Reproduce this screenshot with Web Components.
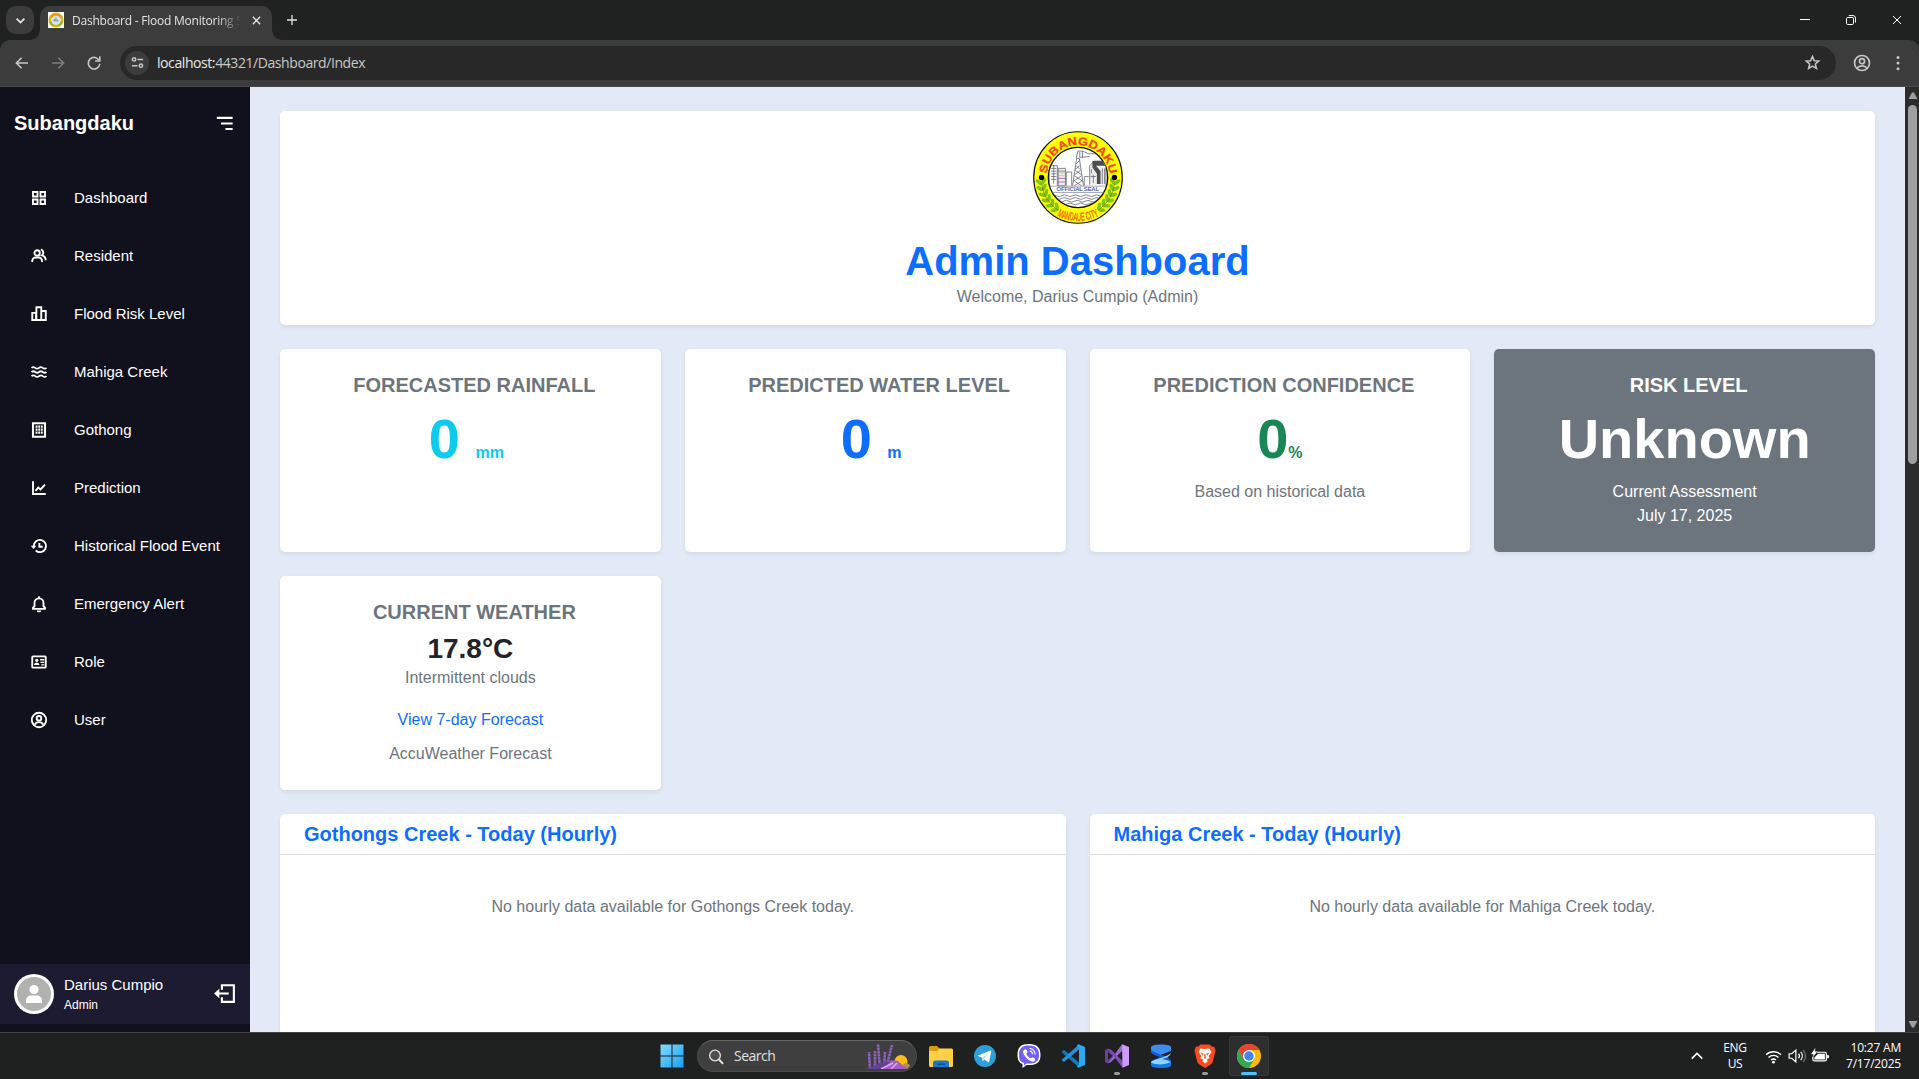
<!DOCTYPE html>
<html lang="en">
<head>
<meta charset="utf-8">
<title>Dashboard - Flood Monitoring System</title>
<style>
html,body{margin:0;height:100%;overflow:hidden;background:#1f2020;font-family:"Liberation Sans",Arial,sans-serif}
</style>
</head>
<body>
<desktop-screen></desktop-screen>
<script>
const UI = '"Open Sans","Noto Sans",sans-serif';

const define = (name, css, html) => customElements.define(name, class extends HTMLElement {
  constructor() {
    super();
    this.attachShadow({ mode: 'open' }).innerHTML =
      `<style>*{box-sizing:border-box}${css}</style>${typeof html === 'function' ? html(this) : html}`;
  }
});

const S = 'fill="none" stroke="currentColor"';
const ICONS = {
  grid: `<g ${S}><path d="M4 4h6v6H4zM14 4h6v6h-6zM4 14h6v6H4zM14 14h6v6h-6z"/></g>`,
  group: `<g ${S}><circle cx="9.500" cy="8" r="3.600"/><path d="M3 20v-1.500a4.500 4.500 0 0 1 4.500-4.500h4a4.500 4.500 0 0 1 4.500 4.500V20"/><path d="M14.500 3.200a4.600 4.600 0 0 1 1.400 8c3.200.9 5.100 3.100 5.100 6.300"/></g>`,
  bars: `<g ${S}><path d="M3 10.500h5V20H3zM8.500 20V3h6.500v17zM15.500 8H21v12h-6"/></g>`,
  water: `<g ${S}><path d="M2 6.500c2-1.600 3-1.600 5 0s3 1.600 5 0 3-1.600 5 0 3 1.600 5 0M2 12c2-1.600 3-1.600 5 0s3 1.600 5 0 3-1.600 5 0 3 1.600 5 0M2 17.500c2-1.600 3-1.600 5 0s3 1.600 5 0 3-1.600 5 0 3 1.600 5 0"/></g>`,
  building: `<path ${S} stroke-width="2.800" d="M4 3h16v18H4z"/><path fill="currentColor" d="M7.500 6h2.500v3H7.500zM11 6h2.500v3H11zM14.500 6H17v3h-2.500zM7.500 10h2.500v3H7.500zM11 10h2.500v3H11zM14.500 10H17v3h-2.500zM7.500 14h2.500v3H7.500zM11 14h2.500v3H11zM14.500 14H17v3h-2.500z"/>`,
  line: `<g ${S}><path d="M4 3v17h17"/><path d="M7.300 15.700 11 11.500l3 2.500 6-6.500"/></g>`,
  history: `<g ${S}><path d="M5 12a8.200 8.200 0 1 1 2.600 6"/><path d="M12.500 8v5h4.500"/></g><path fill="currentColor" d="M1 11.500h7.500l-3.700 4.600z"/>`,
  bell: `<g ${S}><path d="M6 10.500a6 6 0 0 1 12 0V15l2 2v1.500H4V17l2-2z"/></g><path fill="currentColor" d="M9 20.500h6a3 2.500 0 0 1-6 0zM10.500 3a1.500 1.500 0 0 1 3 0v2h-3z"/>`,
  idcard: `<rect ${S} x="3" y="4.500" width="18" height="15" rx="1"/><circle cx="9" cy="9.800" r="2.100" fill="currentColor"/><path fill="currentColor" d="M5.500 16c0-2.400 1.500-3.500 3.500-3.500s3.500 1.100 3.500 3.500zM13.500 8H19v2h-5.500zM14 11.500h5v1.800h-5zM15 15h4v1.500h-4z"/>`,
  user: `<g ${S}><circle cx="12" cy="12" r="9.600"/><circle cx="12" cy="9.700" r="3.100"/><path d="M6.500 18.500C7 15.500 9 14.800 12 14.800s5 .7 5.500 3.700"/></g>`,
  menu: `<path fill="currentColor" d="M4 5h16.500v2.200H4zM8.300 10.900h12.200v2.200H8.300zM13 16.700h7.500v2.200H13z"/>`,
  logout: `<path ${S} d="M9.500 8.500V4H21v16H9.500v-4.500"/><path ${S} d="M5 12h11"/><path fill="currentColor" d="M2 12l5-4.500v9z"/>`,
  back: `<path ${S} d="M20 12H5M11.500 5 4.500 12l7 7"/>`,
  forward: `<path ${S} d="M4 12h15M12.500 5l7 7-7 7"/>`,
  reload: `<path ${S} d="M19 9A7.700 7.700 0 1 0 19.700 13"/><path fill="currentColor" d="M20.800 3v7.300h-7.300v-2.100h5.200V3z"/>`,
  tune: `<g ${S}><circle cx="6.500" cy="7" r="2.700"/><path d="M12 7h9M3 17h9"/><circle cx="17.500" cy="17" r="2.700"/></g>`,
  star: `<path ${S} d="M12 3.500l2.500 5.900 6.300.5-4.800 4.200 1.500 6.200-5.500-3.300-5.500 3.300 1.500-6.200-4.800-4.200 6.300-.5z"/>`,
  profile: `<g ${S}><circle cx="12" cy="12" r="10"/><circle cx="12" cy="9.600" r="3.400"/><path d="M5 19c1.800-2.300 4-3.200 7-3.200s5.200.9 7 3.200"/></g>`,
  dots: `<g fill="currentColor"><circle cx="12" cy="4.500" r="2"/><circle cx="12" cy="12" r="2"/><circle cx="12" cy="19.500" r="2"/></g>`,
  down: `<path ${S} stroke-width="4" d="M3.500 8l8.500 8.500L20.500 8"/>`,
  up: `<path ${S} stroke-width="2.600" d="M3 16.500l9-9 9 9"/>`,
  close: `<path ${S} d="M4 4l16 16M20 4L4 20"/>`,
  plus: `<path ${S} stroke-width="2.600" d="M12 2v20M2 12h20"/>`,
  minus: `<path ${S} d="M2 11h20"/>`,
  restore: `<g ${S}><rect x="3" y="7" width="14" height="14" rx="2.500"/><path d="M7.500 3.200H16a5 5 0 0 1 5 5V17"/></g>`,
  search: `<g ${S}><circle cx="10.500" cy="10.500" r="8" fill="#ffffff14"/><path d="M16.500 16.500 22.500 23" stroke-width="3"/></g>`,
  wifi: `<g ${S}><path d="M1.500 9.500a15 15 0 0 1 21 0M5 13.300a10 10 0 0 1 14 0M8.500 17a5.200 5.200 0 0 1 7 0"/></g><circle cx="12" cy="20" r="2" fill="currentColor"/>`,
  sound: `<g ${S} stroke-width="1.600"><path d="M1.500 9v6H5l5.500 5V4L5 9zM14 9a4.500 4.500 0 0 1 0 6M17 6.500a8.500 8.500 0 0 1 0 11"/><path d="M20.200 4a12 12 0 0 1 0 16" opacity=".35"/></g>`,
  battery: `<path ${S} stroke-width="1.600" d="M8 7h10.500a2 2 0 0 1 2 2v7.500a2 2 0 0 1-2 2h-14a2 2 0 0 1-2-2V13"/><path fill="currentColor" d="M9.500 9h9v7.500h-14V14zM21.500 10.500h1a1.500 1.500 0 0 1 1.500 1.500v1.500a1.500 1.500 0 0 1-1.500 1.500h-1zM6 1 0 9.500h3.500L2 14l6.500-8H5z"/>`
};
define('ui-icon', ':host{display:block;flex:none;line-height:0}svg{display:block;width:100%;height:100%}',
  el => `<svg viewBox="0 0 24 24" stroke-width="${el.getAttribute('weight') || 2}">${ICONS[el.getAttribute('name')]}</svg>`);

const branch = Array.from({ length: 6 }, (_, i) => {
  const deg = 171 - i * 9.500, a = deg * Math.PI / 180;
  const x = (50 + 41 * Math.cos(a)).toFixed(1), y = (52 + 41 * Math.sin(a)).toFixed(1);
  return `<g transform="translate(${x} ${y}) rotate(${deg + 90})"><ellipse cx="3.600" rx="4.400" ry="2" transform="rotate(42)"/><ellipse cx="3.600" rx="4.400" ry="2" transform="rotate(-42)"/></g>`;
}).join('') + '<path d="M9.500 58A41 41 0 0 0 28 87" fill="none" stroke="#a06a10" stroke-width=".8"/>';
define('barangay-seal', ':host{display:block}svg{display:block;width:100%;height:100%}', `
<svg viewBox="0 0 100 102" preserveAspectRatio="none">
  <defs>
    <path id="top" d="M15 51a35 35.500 0 0 1 70 0"/>
    <path id="bot" d="M24 92a55 55 0 0 0 52 0"/>
    <clipPath id="in"><circle cx="50" cy="51" r="33"/></clipPath>
  </defs>
  <ellipse cx="50" cy="51" rx="49.200" ry="50.200" fill="#ffff05" stroke="#111" stroke-width="1.300"/>
  <g fill="#7bc618">${branch}<g transform="translate(100 0) scale(-1 1)">${branch}</g></g>
  <circle cx="50" cy="51" r="33" fill="#fff" stroke="#111" stroke-width="1.500"/>
  <g clip-path="url(#in)" fill="none" stroke="#555a66" stroke-width=".8">
    <path d="M18 60V38h9v22M20 41h6M20 44h6M20 47h6M20 50h6M20 53h6M23 38v20M37 60V45h6v15M57 60V50h5"/>
    <path d="M28 60V41h8v19z" fill="#eee"/><path d="M28 44h8M28 52h8M28 56h8" stroke="#9b45a8"/><path d="M29 46h6M29 49h6" stroke="#a7cc35"/>
    <path d="M44 60 48.500 30h3L56 60M45 55l9-6M55 55l-9-6M46 48l7-5M54 48l-7-5M47 42l5-4M52 42l-4-4M48 36l4-4M46 60l8-5M54 60l-8-5"/>
    <path d="M48 30l2-8h5l7 3h8M52 23v6l11-1M55 22v7"/>
    <path d="M63 59V38l5-5h13v26" fill="#eee"/><path d="M66 33h14v5H70l5 6v14h-4V47l-5-7z" fill="#4d4d52" stroke="none"/><path d="M77 41v17M79.500 41v17M65 42v4M67 48v9M64 50h6"/>
    <path d="M16 60.500h68M16 67.500h68" stroke="#889"/>
    <path d="M20 71q3-2 6 0t6 0 6 0 6 0 6 0 6 0 6 0 6 0 6 0 6 0M20 74q3-2 6 0t6 0 6 0 6 0 6 0 6 0 6 0 6 0 6 0 6 0M22 77q3-2 6 0t6 0 6 0 6 0 6 0 6 0 6 0 6 0 6 0M26 80q3-2 6 0t6 0 6 0 6 0 6 0 6 0 6 0 6 0"/>
  </g>
  <circle cx="9.500" cy="51" r="3" fill="#000"/><circle cx="90.500" cy="51" r="3" fill="#000"/>
  <text font-family="Liberation Sans" font-size="5.800" fill="#2c50c8" stroke="#2c50c8" stroke-width=".15" x="26" y="66.200" textLength="47" lengthAdjust="spacingAndGlyphs">OFFICIAL SEAL</text>
  <text font-family="Liberation Sans" font-weight="700" font-size="12.500" fill="#f4471c" stroke="#f4471c" stroke-width=".3"><textPath href="#top" startOffset="4" textLength="103" lengthAdjust="spacingAndGlyphs">SUBANGDAKU</textPath></text>
  <text font-family="Liberation Sans Narrow,Liberation Sans" font-size="12.500" fill="#f4581c" stroke="#f4581c" stroke-width=".3"><textPath href="#bot" startOffset="3" textLength="48" lengthAdjust="spacingAndGlyphs">MANDAUE CITY</textPath></text>
</svg>`);

define('seal-favicon', ':host{display:block;flex:none;width:16px;height:16px;background:#fff}svg{display:block}',
`<svg width="16" height="16"><circle cx="8" cy="8" r="6.300" fill="#dce4e8" stroke="#d5b800" stroke-width="2.400"/><path d="M3 5.500a5.800 5.800 0 0 1 10 0" fill="none" stroke="#ee9a20" stroke-width="2"/><path d="M2.300 9.500a6 6 0 0 0 3 4M13.700 9.500a6 6 0 0 1-3 4" fill="none" stroke="#9cb428" stroke-width="2"/><path d="M5.500 9.500V7h2V5h1v2.500h2v2z" fill="#98a0ae"/></svg>`);

define('browser-tabs', `
:host{display:flex;height:40px;background:#202221;align-items:flex-end;color:#e3e3e3;font-family:${UI}}
.drop{width:28px;height:28px;border-radius:10px;background:#3c3c3c;margin:0 6px 6px;display:grid;place-items:center}
.drop ui-icon{width:11px;height:11px}
.tab{position:relative;width:232px;height:34px;background:#3c3c3c;border-radius:10px 10px 0 0;display:flex;align-items:center;padding:0 10px 6px 8px}
.tab:before,.tab:after{content:"";position:absolute;bottom:0;width:10px;height:10px}
.tab:before{left:-10px;background:radial-gradient(circle at 0 0,transparent 9.500px,#3c3c3c 10px)}
.tab:after{right:-10px;background:radial-gradient(circle at 100% 0,transparent 9.500px,#3c3c3c 10px)}
.title{margin-left:8px;width:174px;font-size:12px;letter-spacing:-.23px;line-height:17px;white-space:nowrap;-webkit-mask:linear-gradient(90deg,#000 145px,transparent 169px);mask:linear-gradient(90deg,#000 145px,transparent 169px)}
.x{width:11px;height:11px;margin-left:auto}
.plus{width:12px;height:12px;margin:0 0 14px 14px}
.win{margin-left:auto;display:flex;align-self:stretch;color:#fff}
.win div{width:46px;display:grid;place-items:center}
.win ui-icon{width:12px;height:12px}
.win div:last-child{width:45px}`,
`<div class="drop"><ui-icon name="down"></ui-icon></div>
<div class="tab"><seal-favicon></seal-favicon><div class="title">Dashboard - Flood Monitoring S</div><ui-icon class="x" weight="3" name="close"></ui-icon></div>
<ui-icon class="plus" name="plus"></ui-icon>
<div class="win"><div><ui-icon name="minus"></ui-icon></div><div><ui-icon name="restore"></ui-icon></div><div><ui-icon name="close"></ui-icon></div></div>`);

define('browser-toolbar', `
:host{display:block;background:#202221;height:47px}
.bar{display:flex;align-items:center;height:47px;padding:0 12px 1px 13px;background:#3c3c3c;border-bottom:1px solid #4a4a4a;border-radius:10px 10px 0 0;color:#c7c7c7;font-family:${UI}}
.nav{width:18px;height:18px;margin-right:18px}
.nav.off{color:#7d7d7d}.nav.re{margin-right:17px}
.omni{flex:1;height:34px;border-radius:17px;background:#282828;display:flex;align-items:center;padding:0 15px 0 5px}
.site{width:24px;height:24px;border-radius:50%;background:#3c3c3c;display:grid;place-items:center;margin-right:8px}
.site ui-icon{width:15px;height:15px}
.url{font-size:14px;letter-spacing:-.42px;color:#c9c9c9}.url b{font-weight:400;color:#e8e8e8}
.star{margin-left:auto;width:17px;height:17px}
.prof{width:18px;height:18px;margin:0 18px 0 17px}
.dots{width:18px;height:18px}`,
`<div class="bar"><ui-icon class="nav" weight="2.200" name="back"></ui-icon><ui-icon class="nav off" weight="2.200" name="forward"></ui-icon><ui-icon class="nav re" weight="2.200" name="reload"></ui-icon>
<div class="omni"><div class="site"><ui-icon weight="2.400" name="tune"></ui-icon></div><div class="url"><b>localhost:</b>44321/Dashboard/Index</div><ui-icon class="star" weight="2.200" name="star"></ui-icon></div>
<ui-icon class="prof" weight="2.200" name="profile"></ui-icon><ui-icon class="dots" name="dots"></ui-icon></div>`);

define('nav-item', `
:host{display:flex;align-items:center;height:50px;margin-bottom:8px;color:#fff;font-size:15px}
ui-icon{width:18px;height:18px;margin:1px 26px 0 16px}`,
el => `<ui-icon weight="2.500" name="${el.getAttribute('icon')}"></ui-icon><slot></slot>`);

define('user-panel', `
:host{display:flex;align-items:center;height:60px;background:#1d1b31;padding:0 14px;color:#fff}
svg{width:40px;height:40px;margin-right:10px;flex:none}
.n{font-size:15px;line-height:20px}.r{font-size:12px;line-height:16px;margin-top:2px}
.who{margin-top:-1px}
ui-icon{width:25px;height:25px;margin-left:auto;margin-right:-1px;margin-top:-2px}`,
`<svg viewBox="0 0 40 40"><circle cx="20" cy="20" r="20" fill="#fff"/><circle cx="20" cy="20" r="17" fill="#b1b1b1"/><circle cx="20" cy="15.500" r="4.600" fill="#fff"/><path d="M12 29v-2.500a5 5 0 0 1 5-5h6a5 5 0 0 1 5 5V29z" fill="#fff"/></svg>
<div class="who"><div class="n"><slot></slot></div><div class="r"><slot name="role"></slot></div></div><ui-icon name="logout"></ui-icon>`);

define('side-bar', `
:host{display:flex;flex-direction:column;width:250px;flex:none;background:#11101d;color:#fff;padding-bottom:8px}
header{display:flex;align-items:center;justify-content:space-between;height:60px;padding:12px 14px 0;font-size:20px;font-weight:700}
header ui-icon{width:23px;height:23px}
nav{padding:25px 14px 0;flex:1}`,
`<header><span>Subangdaku</span><ui-icon name="menu"></ui-icon></header>
<nav>
<nav-item icon="grid">Dashboard</nav-item><nav-item icon="group">Resident</nav-item><nav-item icon="bars">Flood Risk Level</nav-item>
<nav-item icon="water">Mahiga Creek</nav-item><nav-item icon="building">Gothong</nav-item><nav-item icon="line">Prediction</nav-item>
<nav-item icon="history">Historical Flood Event</nav-item><nav-item icon="bell">Emergency Alert</nav-item><nav-item icon="idcard">Role</nav-item><nav-item icon="user">User</nav-item>
</nav>
<user-panel>Darius Cumpio<span slot="role">Admin</span></user-panel>`);

const CARD = 'background:#fff;border-radius:5px;box-shadow:0 2px 4px rgba(0,0,0,.075);';
define('page-banner', `
:host{display:flex;flex-direction:column;align-items:center;${CARD}height:214px;padding-top:20px}
barangay-seal{width:90px;height:93px}
h1{margin:13px 0 0;font-size:40px;line-height:48px;color:#0d6efd}
p{margin:0;font-size:16px;line-height:24px;color:#6c757d}`,
`<barangay-seal></barangay-seal><h1>Admin Dashboard</h1><p>Welcome, Darius Cumpio (Admin)</p>`);

define('stat-card', `
:host{display:block;${CARD}padding:24px;text-align:center;font-size:16px;line-height:24px;color:#6c757d}
:host([dark]){background:#6c757d;color:#fff}
h5{margin:0 0 8px;padding-left:8px;font-size:20px;line-height:24px;font-weight:700}`,
el => `<h5>${el.getAttribute('heading')}</h5><slot></slot>`);

define('stat-value', `
:host{display:block;font-size:56px;line-height:67.200px;font-weight:700;margin-bottom:8px;white-space:pre}
span{font-size:16px;line-height:1}
:host([unit=mm]) span,:host([unit=m]) span{margin-right:8px}`,
el => { const u = el.getAttribute('unit'); return `<slot></slot>${u ? (u === '%' ? '' : ' ') + `<span>${u}</span>` : ''}`; });

define('weather-report', `
:host{display:block}
.t{font-size:28px;line-height:33.600px;font-weight:700;color:#212529}
.l{color:#0d6efd;margin:18px 0 10px}`,
`<div class="t">17.8°C</div><div>Intermittent clouds</div><div class="l">View 7-day Forecast</div><div>AccuWeather Forecast</div>`);

define('creek-card', `
:host{display:block;${CARD}height:420px}
h5{margin:0;padding:8px 24px;font-size:20px;line-height:24px;color:#0d6efd;border-bottom:1px solid #dcdddf}
p{margin:0;padding-top:40px;text-align:center;font-size:16px;line-height:24px;color:#6c757d}`,
el => `<h5>${el.getAttribute('creek')} Creek - Today (Hourly)</h5><p>No hourly data available for ${el.getAttribute('creek')} Creek today.</p>`);

define('dashboard-page', `
:host{display:block;flex:1;background:#e4e9f7;padding:24px 30px 0;overflow:hidden}
.stats{display:grid;grid-template-columns:repeat(4,1fr);gap:24px;margin:24px 0}
.creeks{display:grid;grid-template-columns:1fr 1fr;gap:24px}`,
`<page-banner></page-banner>
<div class="stats">
<stat-card heading="FORECASTED RAINFALL"><stat-value unit="mm" style="color:#0dcaf0">0</stat-value></stat-card>
<stat-card heading="PREDICTED WATER LEVEL"><stat-value unit="m" style="color:#0d6efd">0</stat-value></stat-card>
<stat-card heading="PREDICTION CONFIDENCE"><stat-value unit="%" style="color:#198754">0</stat-value>Based on historical data</stat-card>
<stat-card dark heading="RISK LEVEL"><stat-value>Unknown</stat-value>Current Assessment<br>July 17, 2025</stat-card>
<stat-card heading="CURRENT WEATHER"><weather-report></weather-report></stat-card>
</div>
<div class="creeks"><creek-card creek="Gothongs"></creek-card><creek-card creek="Mahiga"></creek-card></div>`);

define('scroll-bar', `
:host{display:flex;flex-direction:column;align-items:center;width:14px;flex:none;background:#2c2c2c;padding:5px 0 4px 1px}
.t{width:9px;height:359px;border-radius:5px;background:#9f9f9f;margin-top:6px}
svg{display:block;width:10px;height:7px}svg:last-child{margin-top:auto}`,
`<svg viewBox="0 0 10 7"><path d="M4 .5h2L9.500 7H.5z" fill="#9f9f9f"/></svg><div class="t"></div><svg viewBox="0 0 10 7"><path d="M.5 0h9L6 6.500H4z" fill="#9f9f9f"/></svg>`);

const APPS = {
  start: `<defs><linearGradient id="g" x1="0" y1="0" x2="1" y2="1"><stop stop-color="#7fdcff"/><stop offset="1" stop-color="#1d9df2"/></linearGradient></defs><path d="M.5.500h11v11H.5zM12.500.500h11v11h-11zM.5 12.500h11v11H.5zM12.500 12.500h11v11h-11z" fill="url(#g)"/>`,
  folder: `<path d="M0 3.500Q0 2 1.500 2H8l2.500 2.500V8H0z" fill="#dd9b0c"/><path d="M0 7h8l2.500-2.500H22.500Q24 4.500 24 6v15.500q0 1.500-1.500 1.500h-21Q0 23 0 21.500z" fill="#ffcf45"/><path d="M4 23v-4q0-2.500 2.500-2.500h11Q20 16.500 20 19v4z" fill="#1779c5"/><path d="M8 19.500h8v1.500H8z" fill="#0d5597"/>`,
  telegram: `<circle cx="12" cy="12" r="11" fill="#2ba0da"/><path d="M4.500 11.800 17.500 6.500q1-.3.800.8L16.200 17.500q-.3 1-1.300.4L11.500 15.400l-1.800 1.700-.6-3.400z" fill="#fff"/><path d="M9.100 13.700l6.400-5-4.500 6.500-1.300 1.900z" fill="#c5dcec"/>`,
  viber: `<path d="M12 0C4 0 .5 3 .5 11c0 5 1.500 7.500 5 9v4l4-3H12c8 0 11.500-2.500 11.500-10S20 0 12 0z" fill="#fff"/><path d="M12 1.500c-7 0-10 2.500-10 9.500 0 4.500 1.300 6.800 5 8v2.500l2.500-2H12c7 0 10-2.200 10-8.500S19 1.500 12 1.500z" fill="#7360f2"/><path d="M7.500 5.500c2-1.500 3 2 3 2.500 0 1-1.500 1-1 2 .8 2 2 3.500 4 4.300 1 .2 1-1 2-1 1 .3 3.500 1.500 2.500 3-1.500 2.500-4 1.200-6.500-.5C8.500 13.500 6.500 10.500 6 8q-.2-1.500 1.500-2.500z" fill="#fff"/><path d="M12.500 4.500c3.500.3 5.500 2.500 5.500 6M12.700 7c1.800.2 2.800 1.500 2.800 3.200" fill="none" stroke="#fff" stroke-width="1.100"/>`,
  vscode: `<path d="M.5 8 3 6l15 12.500v5z" fill="#0a7cc4"/><path d="M.5 16 3 18l15-12.500V.5z" fill="#2393dc"/><path d="M17.500.2 24 3v18l-6.500 2.800L15.500 22l2.500-1V3l-2.500-1z" fill="#2fa9f4"/>`,
  vs: `<path d="M0 6l3-1.500L12 12l-9 7.500L0 18z" fill="#6a3e9e"/><path d="M3 8v8l4.500-4z" fill="#1f2020"/><path d="M3 19.500 17 .3 18 6 6 18z" fill="#9a6ad0"/><path d="M3 4.500 17.500 23.800 18.500 18 6.500 6z" fill="#7c4dbd"/><path d="M17 .3 24 3v18l-6.500 2.800z" fill="#cc9cf7"/>`,
  ssms: `<path d="M2 3C2-.5 22-.5 22 3v4L10 11.500C5 11 2 9.500 2 7z" fill="#3b8ef0"/><path d="M2 5c0 4 20 7 20 12v4c0 4-20 4-20 0v-4l9-4C6 11.500 2 10 2 7z" fill="#1558dc"/><path d="M2 18c2-3 15-4 20-9-1 4-5 5-9 6 5 1 9 2 9 5 0 2-20 2-20-2z" fill="#8cd5ff"/><path d="M2 19c6 2 14 2 20-1v3.500c0 3.300-20 3.300-20 0z" fill="#1178ea"/><path d="M0 10.500 5 12.500 0 15zM24 8.500V16l-5-3z" fill="#1f2020"/>`,
  brave: `<path d="M7.500.5h9L19 2.800l2-.3 1.500 4-.5 2L20 17q-.5 2-2 3.200L12 24l-6-3.800Q4.500 19 4 17L2 8.500l-.5-2 1.500-4 2 .3z" fill="#fb4c1f"/><path d="M12 5 16.500 4.500 18.500 8l-2.800 4 .8 2.300-2.800 1.200 1 1.700L12 19.500l-2.700-2.300 1-1.700-2.800-1.200.8-2.300L5.500 8l2-3.500z" fill="#fff"/><path d="M7.500 8.500 10.700 9.800l-.8 2zM16.500 8.500 13.300 9.800l.8 2zM11.500 10h1l.4 4.500h-1.800z" fill="#fb4c1f"/>`,
  chrome: `<circle cx="12" cy="12" r="12" fill="#fbbc05"/><path d="M1.600 6 6.800 15l5.200-3 .5-6H22.400A12 12 0 0 0 1.600 6z" fill="#ea4335"/><path d="M1.600 6A12 12 0 0 0 12 24l5.200-9-10.400 0z" fill="#34a853"/><circle cx="12" cy="12" r="6" fill="#fff"/><circle cx="12" cy="12" r="4.700" fill="#4285f4"/>`
};
define('task-app', `
:host{position:relative;width:40px;height:40px;margin:0 2px;display:grid;place-items:center;border-radius:4px}
:host([active]){background:#2e2e2e;box-shadow:inset 0 0 0 1px #383838}
svg{width:24px;height:24px;display:block}
:host([running]):after{content:"";position:absolute;bottom:1px;left:17px;width:6px;height:3px;border-radius:2px;background:#9a9a9a}
:host([active]):after{left:12px;width:16px;background:#4cc2ff}`,
el => `<svg viewBox="0 0 24 24">${APPS[el.getAttribute('name')]}</svg>`);

define('task-search', `
:host{display:flex;align-items:center;width:220px;height:32px;border-radius:16px;background:#3f3f3f;border:1px solid #4b4b4b;border-top-color:#666;margin:0 2px 0 3px;padding:0 6px 0 10px;color:#e0e0e0;font:14px ${UI};letter-spacing:-.5px}
ui-icon{width:16px;height:17px;margin-right:10px}
span{margin-top:-1px}
svg{margin-left:auto;width:43px;height:26px}`,
`<ui-icon name="search"></ui-icon><span>Search</span>
<svg viewBox="0 0 43 26"><circle cx="34" cy="18.500" r="6.500" fill="#fdbd12"/><g stroke="#8c62bd" stroke-width="2.600" stroke-dasharray="2.600 .5" fill="none"><path d="M3 26 2 9M8 26V8M13 26 11 1M17 24 18 9M20 22 25 2"/></g><path d="M11 25q8-10 20-7l9 8H9z" fill="#a45fc4"/><path d="M0 26q8-4 14-6l10-2-8 8z" fill="#643f96"/><path d="M14 26l12-6M24 26l6-6" stroke="#e3a7e8" stroke-width="1.500"/><path d="M35 22l4-2q4 1 4 3l-3 3z" fill="#b88a5c"/></svg>`);

define('task-bar', `
:host{display:grid;grid-template-columns:1fr auto 1fr;align-items:center;height:47px;background:#1f2020;border-top:1px solid #434343;color:#fff;font:12px/16px ${UI};letter-spacing:-.3px}
.mid{grid-column:2;display:flex;align-items:center;margin-left:2px}
.tray{display:flex;align-items:center;justify-content:flex-end;padding-right:18px}
.up{width:14px;height:14px;margin-right:18px}
.lang{text-align:center;width:26px;margin-right:17px}
.w{width:17px;height:17px;margin-right:6px}.s{width:18px;height:18px;margin-right:5px}.b{width:18px;height:18px}
.clock{text-align:right;margin-left:14px;width:58px;white-space:nowrap;letter-spacing:-.2px}`,
`<div class="mid"><task-app name="start"></task-app><task-search></task-search><task-app name="folder"></task-app><task-app name="telegram"></task-app><task-app name="viber"></task-app><task-app name="vscode"></task-app><task-app name="vs" running></task-app><task-app name="ssms"></task-app><task-app name="brave" running></task-app><task-app name="chrome" running active></task-app></div>
<div class="tray"><ui-icon class="up" name="up"></ui-icon><div class="lang">ENG<br>US</div><ui-icon class="w" name="wifi"></ui-icon><ui-icon class="s" name="sound"></ui-icon><ui-icon class="b" name="battery"></ui-icon><div class="clock">10:27 AM<br>7/17/2025</div></div>`);

define('desktop-screen', `
:host{display:flex;flex-direction:column;height:100vh;overflow:hidden}
main{flex:1;min-height:0;display:flex}`,
`<browser-tabs></browser-tabs><browser-toolbar></browser-toolbar><main><side-bar></side-bar><dashboard-page></dashboard-page><scroll-bar></scroll-bar></main><task-bar></task-bar>`);
</script>
</body>
</html>
